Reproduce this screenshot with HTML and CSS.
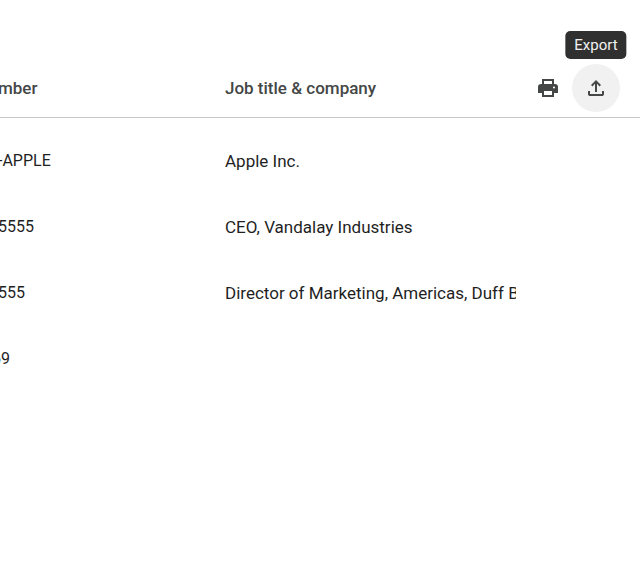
FILE: index.html
```html
<!DOCTYPE html>
<html lang="en">
<head>
<meta charset="utf-8">
<title>Contacts</title>
<link rel="stylesheet" href="styles.css">
</head>
<body>
<main>
<table class="contacts">
  <colgroup><col class="col-phone"><col class="col-job"><col></colgroup>
  <thead>
    <tr>
      <th scope="col" class="phone">mber</th>
      <th scope="col">Job title &amp; company</th>
      <td>
        <div class="actions">
          <button class="icon-button" type="button" aria-label="Print">
            <svg viewBox="0 0 24 24" width="24" height="24" aria-hidden="true"><path fill-rule="evenodd" d="M6 3h12v5H6zM8 5v3h8V5zM5 8h14a3 3 0 0 1 3 3v6h-4v4H6v-4H2v-6a3 3 0 0 1 3-3zM8 15v4h8v-4zM18 10.500a1 1 0 1 0 0 2 1 1 0 0 0 0-2z"/></svg>
          </button>
          <button class="icon-button hovered" type="button" aria-label="Export">
            <svg viewBox="0 0 24 24" width="24" height="24" aria-hidden="true"><path d="M11 16V7.850l-2.600 2.600L7 9l5-5 5 5-1.400 1.450-2.600-2.600V16zM6 20q-.825 0-1.412-.587T4 18v-3h2v3h12v-3h2v3q0 .825-.587 1.413T18 20z"/></svg>
            <span class="tooltip">Export</span>
          </button>
        </div>
      </td>
    </tr>
  </thead>
  <tbody>
    <tr><td class="phone">-APPLE</td><td>Apple Inc.</td><td></td></tr>
    <tr><td class="phone">5555</td><td>CEO, Vandalay Industries</td><td></td></tr>
    <tr><td class="phone">555</td><td>Director of Marketing, Americas, Duff B</td><td></td></tr>
    <tr><td class="phone phone-cut">69</td><td></td><td></td></tr>
  </tbody>
</table>
</main>
</body>
</html>
```
FILE: styles.css
```css
body {
  margin: 0;
  background: #fff;
  color: #1f1f1f;
  font: 17px/24px Roboto, sans-serif;
}

main {
  padding-top: 58px;
}

.contacts {
  width: 100%;
  table-layout: fixed;
  border-collapse: separate;
  border-spacing: 0;
}

.col-phone { width: 225px; }
.col-job { width: 291px; }

th, td {
  padding: 0;
  text-align: left;
  white-space: nowrap;
  overflow: hidden;
}

thead th, thead td {
  height: 59px;
  border-bottom: 1px solid #c7c7c7;
  color: #444746;
  font-weight: 500;
}

thead td {
  overflow: visible;
}

tbody td {
  height: 66px;
}

tbody::before {
  content: "";
  display: block;
  height: 10px;
}

.phone { text-indent: -2px; }
.phone-cut { text-indent: -8px; }
tbody .phone { font-size: 16px; }

.actions {
  display: flex;
  justify-content: flex-end;
  padding-right: 20px;
}

.icon-button {
  position: relative;
  display: grid;
  place-items: center;
  width: 48px;
  height: 48px;
  padding: 0;
  border: 0;
  border-radius: 50%;
  background: none;
}

.icon-button svg {
  width: 24px;
  height: 24px;
  fill: #444746;
}
.hovered { background: #f1f1f1; }

.tooltip {
  position: absolute;
  bottom: 53px;
  left: 50%;
  transform: translateX(-50%);
  padding: 2px 9px;
  border-radius: 5px;
  background: #303030;
  color: #f2f2f2;
  font: 15px/24px Roboto, sans-serif;
}
```
